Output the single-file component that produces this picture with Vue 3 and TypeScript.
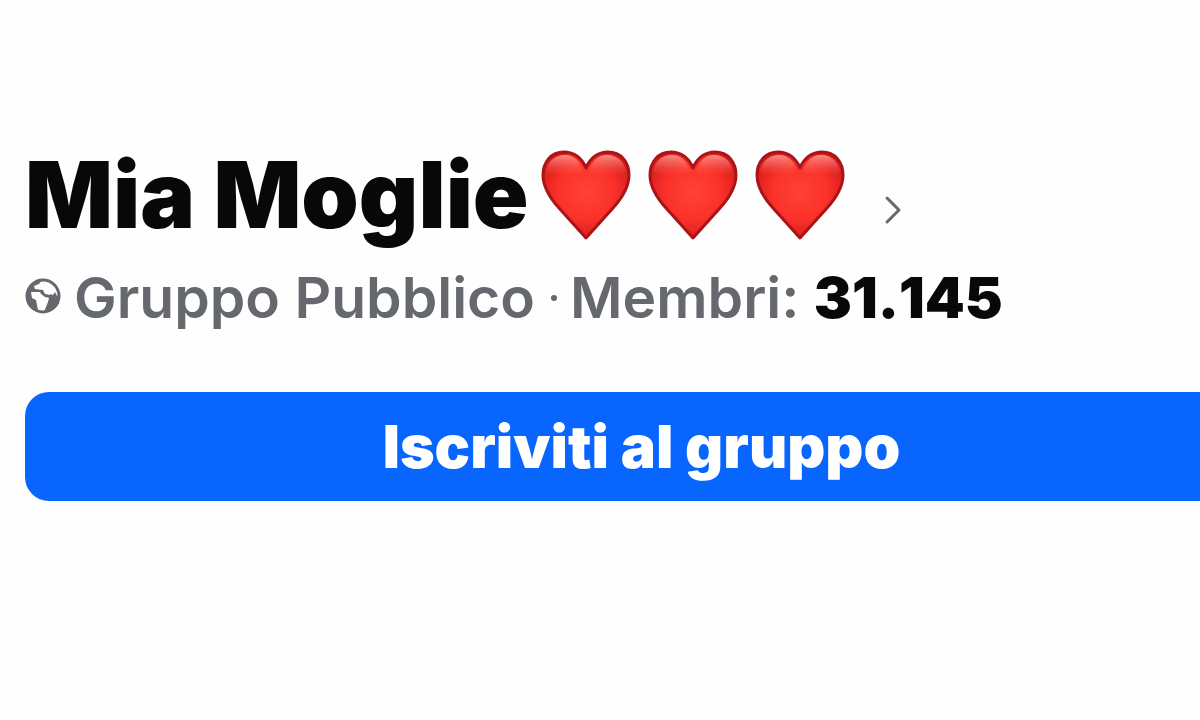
<script setup lang="ts">
const group = {
  name: 'Mia Moglie',
  kind: 'Gruppo Pubblico',
  members: '31.145',
}
const hearts: number[] = [1, 2, 3]
</script>

<template>
  <main class="page">
    <header class="head">
      <h1 class="title">
        <a href="#" class="title-link">
          <span>{{ group.name }}</span>
          <span class="hearts" role="img" aria-label="❤️❤️❤️">
            <svg v-for="n in hearts" :key="n" class="heart" viewBox="0 0 90 90" aria-hidden="true">
              <defs>
                <radialGradient :id="`fill-${n}`" cx="45" cy="42" r="50" gradientUnits="userSpaceOnUse">
                  <stop offset="0" stop-color="#ff4238" />
                  <stop offset="0.55" stop-color="#fb3229" />
                  <stop offset="1" stop-color="#d41a1c" />
                </radialGradient>
                <linearGradient :id="`shine-${n}`" x1="0" y1="3" x2="0" y2="25" gradientUnits="userSpaceOnUse">
                  <stop offset="0" stop-color="#ffb5ac" stop-opacity="0.85" />
                  <stop offset="1" stop-color="#ff6a5e" stop-opacity="0" />
                </linearGradient>
              </defs>
              <path
                d="M45 18C41 8 33 2 23 2C10 2 2 12 2 25C2 37 8 47 18 58L45 88L72 58C82 47 88 37 88 25C88 12 80 2 67 2C57 2 49 8 45 18Z"
                :fill="`url(#fill-${n})`"
                stroke="#aa1419"
                stroke-width="3"
                stroke-linejoin="round"
              />
              <path
                d="M24 5C14 5 6 12 5 22C8 27 18 27 27 26C35 25 41 24 42 21C39 11 33 5 24 5ZM66 5C57 5 51 11 48 21C49 24 55 25 63 26C72 27 82 27 85 22C84 12 76 5 66 5Z"
                :fill="`url(#shine-${n})`"
              />
            </svg>
          </span>
          <svg class="chevron" viewBox="0 0 18 30" aria-hidden="true">
            <path d="M3 3L15 15L3 27" fill="none" stroke="#65686c" stroke-width="3" stroke-linecap="round" stroke-linejoin="round" />
          </svg>
        </a>
      </h1>
      <p class="meta">
        <svg class="globe" viewBox="0 0 36 36" aria-hidden="true">
          <circle cx="18" cy="18" r="16" fill="#fefefe" stroke="#65686c" stroke-width="3" />
          <path
            fill="#65686c"
            d="M2 14C4 7 9 3 17 2L14 6L9 8L10 11L18 12L20 16L25 17L25 20L20 19L16 16L15 14L6 14L7 20L11 22L13 32L17 34C8 34 1 26 2 14Z"
          />
          <path fill="#65686c" d="M34 17C35 26 28 34 19 34L21 29L23 24L24 20L25 16L28 17L30 14L32 18Z" />
        </svg>
        <span class="kind">{{ group.kind }}</span>
        <span class="dot" aria-hidden="true"></span>
        <span>Membri: <strong class="count">{{ group.members }}</strong></span>
      </p>
    </header>
    <button type="button" class="join">Iscriviti al gruppo</button>
  </main>
</template>

<style>
body {
  margin: 0;
  background: #fefefe;
}
</style>

<style scoped>
.page {
  display: flex;
  flex-direction: column;
  gap: 59px;
  padding: 145px 0 60px 25px;
  overflow: hidden;
  font-family: Inter, "Liberation Sans", sans-serif;
  color: #080809;
}

.head {
  display: flex;
  flex-direction: column;
  gap: 18px;
}

.title {
  margin: 0;
  font-size: 92px;
  line-height: 100px;
  font-weight: 900;
  white-space: nowrap;
}

.title-link {
  display: flex;
  align-items: center;
  color: inherit;
  text-decoration: none;
}

.hearts {
  display: flex;
  gap: 17px;
  margin-left: 12px;
}

.heart {
  width: 90px;
  height: 90px;
}

.chevron {
  width: 18px;
  height: 30px;
  margin: 30px 0 0 39px;
}

.meta {
  display: flex;
  align-items: center;
  margin: 0;
  font-size: 57px;
  line-height: 70px;
  font-weight: 600;
  color: #65686c;
  white-space: nowrap;
}

.globe {
  width: 36px;
  height: 36px;
  margin: 0 13px 4px 0;
}

.dot {
  width: 6px;
  height: 6px;
  margin: 0 13px 0 16px;
  border-radius: 50%;
  background: #65686c;
}

.count {
  font-weight: 900;
  font-kerning: none;
  color: #080809;
}

.join {
  margin: 0 -58px 0 0;
  padding: 20px;
  border: 0;
  border-radius: 24px;
  background: #0866ff;
  color: #fff;
  font-family: inherit;
  font-size: 59px;
  line-height: 69px;
  font-weight: 900;
  cursor: pointer;
}
</style>
